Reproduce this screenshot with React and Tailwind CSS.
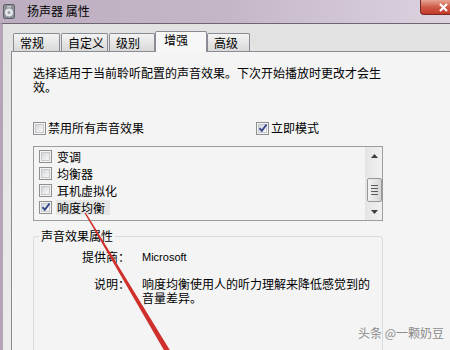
import React from 'react';

const Check = ({ checked }) => (
    <span className="w-[13px] h-[13px] shrink-0 border border-[#8f8f8f] bg-[#f4f4f4] flex items-center justify-center">
        <span className="relative w-[9px] h-[9px] border border-[#c5c8cc] bg-linear-to-br from-[#d5d8dc] to-[#f7f7f7]">
            {checked && (
                <svg className="absolute -left-[1px] -top-[2px]" width="10" height="10" viewBox="0 0 10 10">
                    <path d="M1.5 5.2 L3.8 7.8 L8.5 1.5" fill="none" stroke="#31438a" strokeWidth="1.8" />
                </svg>
            )}
        </span>
    </span>
);

const Tab = ({ label, active, w }) => (
    <div
        className={
            active
                ? `h-[21px] -mb-[1px] z-10 border border-b-0 border-[#898c95] rounded-t-[2px] bg-[#f7f7f7] pl-[8px] pt-[1px] ${w}`
                : `h-[18px] border border-b-0 border-[#898c95] rounded-t-[2px] bg-linear-to-b from-[#f3f3f3] to-[#d9d9d9] pl-[6px] pt-[2px] ${w}`
        }
    >
        {label}
    </div>
);

const ListRow = ({ label, checked, focused }) => (
    <div className="h-[17px] flex items-center pl-[5px] gap-[4px]">
        <Check checked={checked} />
        <span className={focused ? 'bg-[#e6e6e6] pl-[1px] pr-[5px] leading-[15px]' : 'pl-[1px]'}>{label}</span>
    </div>
);

const Scrollbar = () => (
    <div className="w-[17px] shrink-0 flex flex-col bg-linear-to-r from-[#e6e6e6] to-[#f0f0f0] border-l border-[#e3e3e3]">
        <div className="h-[17px] flex items-center justify-center">
            <svg width="7" height="4" viewBox="0 0 7 4"><path d="M0 4 L3.5 0 L7 4 Z" fill="#3f3f3f" /></svg>
        </div>
        <div className="flex-1 flex flex-col pt-[14px] items-center">
            <div className="w-[15px] h-[24px] border border-[#979797] rounded-[2px] bg-linear-to-r from-[#f2f2f2] to-[#d6d6d6] flex flex-col items-center justify-center gap-[2px]">
                <span className="w-[7px] h-[1px] bg-[#5a5a5a]" />
                <span className="w-[7px] h-[1px] bg-[#5a5a5a]" />
                <span className="w-[7px] h-[1px] bg-[#5a5a5a]" />
                <span className="w-[7px] h-[1px] bg-[#5a5a5a]" />
            </div>
        </div>
        <div className="h-[17px] flex items-center justify-center">
            <svg width="7" height="4" viewBox="0 0 7 4"><path d="M0 0 L3.5 4 L7 0 Z" fill="#3f3f3f" /></svg>
        </div>
    </div>
);

export default function App() {
    return (
        <div className="relative w-[450px] h-[350px] overflow-hidden bg-[#f4f4f4] font-['Noto_Sans_CJK_SC',sans-serif] text-[12px] leading-[14px] text-black">
            {/* title bar */}
            <div className="h-[23px] flex items-start bg-linear-to-r from-[#bcaec0] via-[#c5b6c7] to-[#dcd3df]">
                <svg className="ml-[3px] mt-[4px]" width="12" height="15" viewBox="0 0 12 15">
                    <rect x="0.5" y="0.5" width="11" height="14" rx="1.5" fill="#8d9197" stroke="#5e6269" />
                    <circle cx="6" cy="8.5" r="4" fill="#e4e7ea" />
                    <circle cx="6" cy="8.5" r="1.5" fill="#9aa0a6" />
                    <rect x="4" y="2" width="4" height="1.5" fill="#c9cdd2" />
                </svg>
                <span className="ml-[12px] mt-[4px] text-[12px] leading-[14px] text-black">扬声器 属性</span>
                <div className="ml-auto w-[30px] h-[15px] rounded-bl-[4px] border-l border-b border-[#7a2a22] bg-linear-to-b from-[#e6a496] via-[#cf5a48] to-[#c23a28] flex items-center justify-end pr-[2px]">
                    <svg width="9" height="9" viewBox="0 0 9 9">
                        <path d="M1 1 L8 8 M8 1 L1 8" stroke="#ffffff" strokeWidth="2.2" />
                    </svg>
                </div>
            </div>

            {/* body */}
            <div className="h-[327px] flex flex-col border-t border-[#6c6670] border-l-[3px] border-l-[#b3a5b7] bg-linear-to-b from-[#e2e2e2] to-[#ececec]">
                <div className="h-[27px] shrink-0 flex items-end pl-[10px]">
                    <Tab label="常规" w="w-[47px]" />
                    <div className="w-[1px]" />
                    <Tab label="自定义" w="w-[47px]" />
                    <div className="w-[1px]" />
                    <Tab label="级别" w="w-[46px]" />
                    <Tab label="增强" w="w-[52px]" active />
                    <Tab label="高级" w="w-[43px]" />
                </div>

                <div className="flex-1 ml-[8px] border-t border-l border-[#898c95] bg-[#f4f4f4] pl-[21px] pt-[14px]">
                    <p>
                        <span className="block">选择适用于当前聆听配置的声音效果。下次开始播放时更改才会生</span>
                        <span className="block">效。</span>
                    </p>

                    <div className="mt-[27px] h-[14px] flex items-center">
                        <div className="w-[223px] flex items-center gap-[2px]">
                            <Check />
                            <span>禁用所有声音效果</span>
                        </div>
                        <div className="flex items-center gap-[2px]">
                            <Check checked />
                            <span>立即模式</span>
                        </div>
                    </div>

                    <div className="mt-[11px] w-[350px] h-[75px] border border-[#9c9c9c] flex">
                        <div className="flex-1 pt-[1px]">
                            <ListRow label="变调" />
                            <ListRow label="均衡器" />
                            <ListRow label="耳机虚拟化" />
                            <ListRow label="响度均衡" checked focused />
                        </div>
                        <Scrollbar />
                    </div>

                    <div className="relative mt-[15px] w-[350px] h-[140px] border border-[#d5dbe0] rounded-[3px] pt-[13px]">
                        <span className="absolute left-[5px] -top-[8px] px-[2px] bg-[#f4f4f4]">声音效果属性</span>
                        <div className="flex">
                            <span className="w-[96px] text-right">提供商：</span>
                            <span className="ml-[12px] font-['Liberation_Sans',sans-serif] text-[11px]">Microsoft</span>
                        </div>
                        <div className="flex mt-[13px]">
                            <span className="w-[96px] text-right">说明：</span>
                            <p className="ml-[12px]">
                                <span className="block">响度均衡使用人的听力理解来降低感觉到的</span>
                                <span className="block">音量差异。</span>
                            </p>
                        </div>
                    </div>
                </div>
            </div>

            {/* watermark */}
            <span className="absolute left-[358px] top-[326px] text-[12px] leading-[14px] text-[#8c8c8c]">头条 @一颗奶豆</span>

            {/* red annotation line */}
            <svg className="absolute left-0 top-0 pointer-events-none" width="450" height="350" viewBox="0 0 450 350">
                <polygon points="84.5,213 86,213 171,352 165,352" fill="#d0302c" />
            </svg>
        </div>
    );
}
